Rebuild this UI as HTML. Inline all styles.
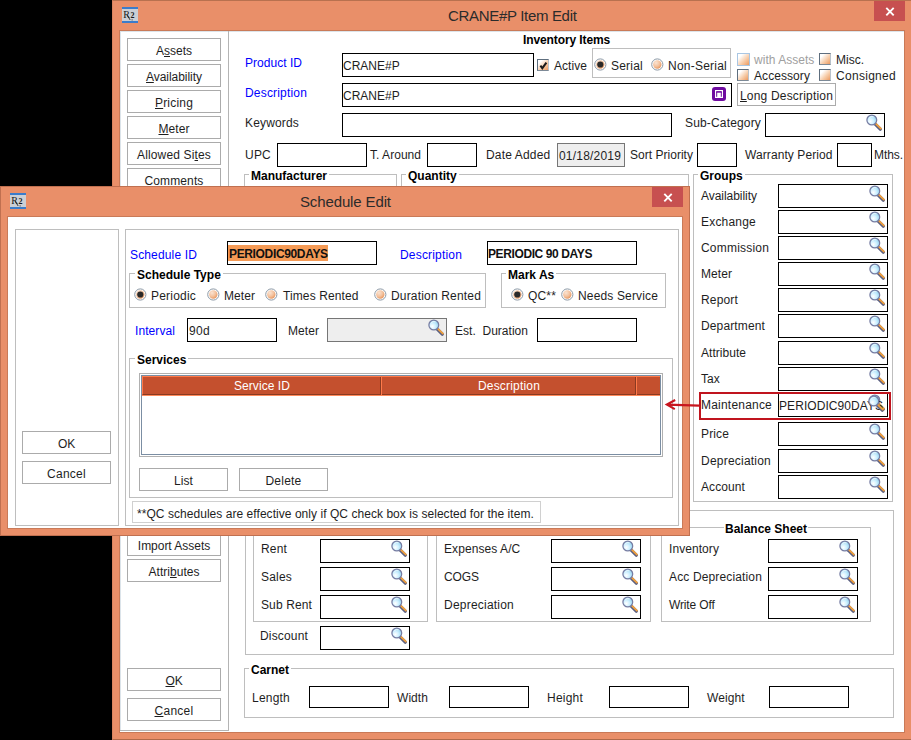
<!DOCTYPE html><html><head><meta charset="utf-8"><style>
html,body{margin:0;padding:0}
body{width:911px;height:740px;overflow:hidden;background:#000;position:relative;font-family:"Liberation Sans",sans-serif;}
div,span,svg{position:absolute;box-sizing:border-box;}
.t{white-space:nowrap;}
.i{overflow:visible}
u{text-decoration:underline;text-underline-offset:1px}
</style></head><body>
<svg width="0" height="0" style="position:absolute">
<defs>
<radialGradient id="lens" cx="35%" cy="65%" r="75%"><stop offset="0" stop-color="#FFFFFF"/><stop offset="0.45" stop-color="#CFF0FF"/><stop offset="1" stop-color="#86CBEA"/></radialGradient>
<radialGradient id="rg" cx="35%" cy="30%" r="80%"><stop offset="0" stop-color="#FBE3D2"/><stop offset="0.55" stop-color="#F3C19C"/><stop offset="1" stop-color="#E58F55"/></radialGradient>
<g id="mag">
<line x1="10.3" y1="10.1" x2="15.3" y2="15.1" stroke="#5C6080" stroke-width="3.4" stroke-linecap="round"/>
<line x1="11.0" y1="9.9" x2="15.9" y2="14.6" stroke="#F3A13C" stroke-width="1.8" stroke-linecap="round"/>
<circle cx="6.8" cy="6" r="4.9" fill="url(#lens)" stroke="#767CA2" stroke-width="1.25"/>
<path d="M4.2 3.8 A3.6 3.6 0 0 1 8.6 2.9" stroke="#fff" stroke-width="0.9" fill="none" opacity="0.8"/>
</g>
</defs></svg>

<div style="left:112px;top:0px;width:799px;height:740px;background:#E98F69;border-top:1px solid #B8714F;border-left:1px solid #D98460;border-bottom:1px solid #B06A4A"></div>
<svg class="i" style="left:122px;top:7px" width="16" height="16"><rect x="0" y="0" width="16" height="16" fill="#CBCFD5"/><rect x="0" y="0" width="16" height="2" fill="#3A7CCB"/><rect x="0" y="14" width="16" height="2" fill="#3A7CCB"/><text x="1.2" y="11.3" font-family="Liberation Serif" font-size="10" fill="#1A1A1A">R</text><path d="M5.2 8.2 L8.2 13" stroke="#222" stroke-width="0.9"/><text x="8.6" y="11.3" font-family="Liberation Serif" font-size="8" font-weight="bold" fill="#1A1A1A">2</text><rect x="9.6" y="12.4" width="1" height="1" fill="#333"/></svg>
<span class="t" style="left:448px;top:8px;font-size:15px;line-height:15px;color:#2B2B2B;letter-spacing:-0.32px">CRANE#P Item Edit</span>
<div style="left:874px;top:1px;width:31px;height:20px;background:#C75050"></div>
<svg class="i" style="left:874px;top:1px" width="31" height="20"><path d="M12.3 6.9 L19.7 14.3 M19.7 6.9 L12.3 14.3" stroke="#fff" stroke-width="1.9"/></svg>
<div style="left:119px;top:30px;width:786px;height:703px;background:#fff;border:1px solid #C97A58;"></div>
<div style="left:120px;top:31px;width:1px;height:700px;background:#DCE4EA"></div>
<div style="left:120px;top:31px;width:784px;height:1px;background:#DCE4EA"></div>
<div style="left:228px;top:31px;width:1px;height:700px;background:#B4B4B4"></div>
<div style="left:120px;top:730px;width:109px;height:1px;background:#B4B4B4"></div>
<div style="left:127px;top:38px;width:94px;height:23px;border:1px solid #ABABAB;background:#fff;"></div>
<span class="t" style="left:-26.0px;width:400px;text-align:center;top:45px;font-size:12px;line-height:12px;color:#1E1E1E;letter-spacing:-0.002px;">A<u>s</u>sets</span>
<div style="left:127px;top:64px;width:94px;height:23px;border:1px solid #ABABAB;background:#fff;"></div>
<span class="t" style="left:-26.0px;width:400px;text-align:center;top:71px;font-size:12px;line-height:12px;color:#1E1E1E;letter-spacing:-0.05px"><u>A</u>vailability</span>
<div style="left:127px;top:90px;width:94px;height:23px;border:1px solid #ABABAB;background:#fff;"></div>
<span class="t" style="left:-26.0px;width:400px;text-align:center;top:97px;font-size:12px;line-height:12px;color:#1E1E1E;letter-spacing:0.189px;"><u>P</u>ricing</span>
<div style="left:127px;top:116px;width:94px;height:23px;border:1px solid #ABABAB;background:#fff;"></div>
<span class="t" style="left:-26.0px;width:400px;text-align:center;top:123px;font-size:12px;line-height:12px;color:#1E1E1E;letter-spacing:0.065px;"><u>M</u>eter</span>
<div style="left:127px;top:142px;width:94px;height:23px;border:1px solid #ABABAB;background:#fff;"></div>
<span class="t" style="left:-26.0px;width:400px;text-align:center;top:149px;font-size:12px;line-height:12px;color:#1E1E1E;letter-spacing:0.151px;">Allowed Si<u>t</u>es</span>
<div style="left:127px;top:168px;width:94px;height:23px;border:1px solid #ABABAB;background:#fff;"></div>
<span class="t" style="left:-26.0px;width:400px;text-align:center;top:175px;font-size:12px;line-height:12px;color:#1E1E1E;letter-spacing:0.123px;">Comments</span>
<div style="left:127px;top:533px;width:94px;height:23px;border:1px solid #ABABAB;background:#fff;"></div>
<span class="t" style="left:-26.0px;width:400px;text-align:center;top:540px;font-size:12px;line-height:12px;color:#1E1E1E;letter-spacing:-0.027px;">Import Assets</span>
<div style="left:127px;top:559px;width:94px;height:23px;border:1px solid #ABABAB;background:#fff;"></div>
<span class="t" style="left:-26.0px;width:400px;text-align:center;top:566px;font-size:12px;line-height:12px;color:#1E1E1E;letter-spacing:0.031px;">Attri<u>b</u>utes</span>
<div style="left:127px;top:668px;width:94px;height:23px;border:1px solid #ABABAB;background:#fff;"></div>
<span class="t" style="left:-26.0px;width:400px;text-align:center;top:675px;font-size:12px;line-height:12px;color:#1E1E1E;letter-spacing:-0.169px;"><u>O</u>K</span>
<div style="left:127px;top:698px;width:94px;height:23px;border:1px solid #ABABAB;background:#fff;"></div>
<span class="t" style="left:-26.0px;width:400px;text-align:center;top:705px;font-size:12px;line-height:12px;color:#1E1E1E;letter-spacing:0.274px;"><u>C</u>ancel</span>
<span class="t" style="left:523px;top:34px;font-size:12px;line-height:12px;color:#000;font-weight:bold;letter-spacing:-0.1px">Inventory Items</span>
<span class="t" style="left:245px;top:57px;font-size:12px;line-height:12px;color:#0000FF;letter-spacing:0.031px;">Product ID</span>
<div style="left:342px;top:53px;width:192px;height:24px;border:1px solid #000;background:#fff;"></div>
<span class="t" style="left:343px;top:60px;font-size:12px;line-height:12px;color:#1E1E1E;letter-spacing:0px">CRANE#P</span>
<div style="left:537px;top:59px;width:12px;height:12px;border-left:1px solid #5E6E7E;border-top:1px solid #5E6E7E;border-right:1px solid #B9C2CB;border-bottom:1px solid #7D8A97;background:linear-gradient(135deg,#fff 0%,#fff 20%,#F7CDAA 60%,#EC9A60 100%)"></div>
<svg class="i" style="left:537px;top:59px" width="13" height="13"><path d="M3.4 6.6 L5.3 9.2 L9.4 3.6" stroke="#1A1A1A" stroke-width="2" fill="none"/></svg>
<span class="t" style="left:554px;top:60px;font-size:12px;line-height:12px;color:#1E1E1E;letter-spacing:0.054px;">Active</span>
<div style="left:592px;top:48px;width:139px;height:30px;border:1px solid #BEBEBE;"></div>
<svg class="i" style="left:594px;top:58px" width="13" height="13"><circle cx="6.3" cy="6.5" r="5.6" fill="#fff" stroke="#8C99A6" stroke-width="1"/><circle cx="6.3" cy="6.5" r="4.2" fill="url(#rg)"/><circle cx="6.3" cy="6.5" r="3.1" fill="#2A2A2A"/></svg>
<span class="t" style="left:611px;top:60px;font-size:12px;line-height:12px;color:#1E1E1E;letter-spacing:0.220px;">Serial</span>
<svg class="i" style="left:651px;top:58px" width="13" height="13"><circle cx="6.3" cy="6.5" r="5.6" fill="#fff" stroke="#8C99A6" stroke-width="1"/><circle cx="6.3" cy="6.5" r="4.2" fill="url(#rg)"/></svg>
<span class="t" style="left:668px;top:60px;font-size:12px;line-height:12px;color:#1E1E1E;letter-spacing:0.231px;">Non-Serial</span>
<div style="left:737px;top:53px;width:13px;height:13px;border:1px solid #A9C6E3;background:linear-gradient(135deg,#fff 0%,#fff 20%,#F7CDAA 60%,#EC9A60 100%)"></div>
<span class="t" style="left:754px;top:54px;font-size:12px;line-height:12px;color:#A0A0A0;letter-spacing:0.029px;">with Assets</span>
<div style="left:819px;top:53px;width:12px;height:12px;border-left:1px solid #5E6E7E;border-top:1px solid #5E6E7E;border-right:1px solid #B9C2CB;border-bottom:1px solid #7D8A97;background:linear-gradient(135deg,#fff 0%,#fff 20%,#F7CDAA 60%,#EC9A60 100%)"></div>
<span class="t" style="left:836px;top:54px;font-size:12px;line-height:12px;color:#1E1E1E;letter-spacing:0.001px;">Misc.</span>
<div style="left:737px;top:69px;width:12px;height:12px;border-left:1px solid #5E6E7E;border-top:1px solid #5E6E7E;border-right:1px solid #B9C2CB;border-bottom:1px solid #7D8A97;background:linear-gradient(135deg,#fff 0%,#fff 20%,#F7CDAA 60%,#EC9A60 100%)"></div>
<span class="t" style="left:754px;top:70px;font-size:12px;line-height:12px;color:#1E1E1E;letter-spacing:0.072px;">Accessory</span>
<div style="left:819px;top:69px;width:12px;height:12px;border-left:1px solid #5E6E7E;border-top:1px solid #5E6E7E;border-right:1px solid #B9C2CB;border-bottom:1px solid #7D8A97;background:linear-gradient(135deg,#fff 0%,#fff 20%,#F7CDAA 60%,#EC9A60 100%)"></div>
<span class="t" style="left:836px;top:70px;font-size:12px;line-height:12px;color:#1E1E1E;letter-spacing:0.292px;">Consigned</span>
<span class="t" style="left:245px;top:87px;font-size:12px;line-height:12px;color:#0000FF;letter-spacing:0.180px;">Description</span>
<div style="left:342px;top:83px;width:390px;height:24px;border:1px solid #000;background:#fff;"></div>
<span class="t" style="left:343px;top:90px;font-size:12px;line-height:12px;color:#1E1E1E;letter-spacing:0px">CRANE#P</span>
<svg class="i" style="left:712px;top:87px" width="14" height="14"><rect x="0" y="0" width="14" height="14" rx="3" fill="#6F0BA0"/><rect x="3" y="3" width="8" height="8" fill="#fff"/><rect x="4.2" y="4.1" width="5.6" height="1.6" fill="#6F0BA0"/><path d="M4.7 5 V9.8 M9.3 5 V9.8" stroke="#6F0BA0" stroke-width="1" fill="none"/></svg>
<div style="left:737px;top:83px;width:99px;height:23px;border:1px solid #ABABAB;background:#fff;"></div>
<span class="t" style="left:586.5px;width:400px;text-align:center;top:90px;font-size:12px;line-height:12px;color:#1E1E1E;letter-spacing:0.184px;"><u>L</u>ong Description</span>
<span class="t" style="left:245px;top:117px;font-size:12px;line-height:12px;color:#1E1E1E;letter-spacing:0.164px;">Keywords</span>
<div style="left:342px;top:113px;width:330px;height:24px;border:1px solid #000;background:#fff;"></div>
<span class="t" style="left:685px;top:117px;font-size:12px;line-height:12px;color:#1E1E1E;letter-spacing:0.163px;">Sub-Category</span>
<div style="left:765px;top:113px;width:120px;height:24px;border:1px solid #000;background:#fff;"></div>
<svg class="i" style="left:865px;top:114px" width="18" height="18"><use href="#mag"/></svg>
<span class="t" style="left:245px;top:149px;font-size:12px;line-height:12px;color:#1E1E1E;letter-spacing:0.221px;">UPC</span>
<div style="left:277px;top:143px;width:90px;height:24px;border:1px solid #000;background:#fff;"></div>
<span class="t" style="left:370px;top:149px;font-size:12px;line-height:12px;color:#1E1E1E;letter-spacing:0.034px;">T. Around</span>
<div style="left:427px;top:143px;width:50px;height:24px;border:1px solid #000;background:#fff;"></div>
<span class="t" style="left:486px;top:149px;font-size:12px;line-height:12px;color:#1E1E1E;letter-spacing:0.162px;">Date Added</span>
<div style="left:557px;top:143px;width:68px;height:24px;border:1px solid #767676;background:#EEEEEE;"></div>
<span class="t" style="left:559px;top:150px;font-size:12px;line-height:12px;color:#1E1E1E;letter-spacing:0.194px;">01/18/2019</span>
<span class="t" style="left:630px;top:149px;font-size:12px;line-height:12px;color:#1E1E1E;letter-spacing:0.025px;">Sort Priority</span>
<div style="left:697px;top:143px;width:40px;height:24px;border:1px solid #000;background:#fff;"></div>
<span class="t" style="left:745px;top:149px;font-size:12px;line-height:12px;color:#1E1E1E;letter-spacing:0.087px;">Warranty Period</span>
<div style="left:837px;top:143px;width:35px;height:24px;border:1px solid #000;background:#fff;"></div>
<span class="t" style="left:874px;top:149px;font-size:12px;line-height:12px;color:#1E1E1E;letter-spacing:-0.068px;">Mths.</span>
<div style="left:244px;top:174px;width:153px;height:340px;border:1px solid #BEBEBE;"></div>
<span class="t" style="left:249px;top:169px;font-size:12px;line-height:14px;font-weight:bold;color:#000;background:#fff;padding:0 2px 0 2px">Manufacturer</span>
<div style="left:401px;top:174px;width:288px;height:340px;border:1px solid #BEBEBE;"></div>
<span class="t" style="left:406px;top:169px;font-size:12px;line-height:14px;font-weight:bold;color:#000;background:#fff;padding:0 2px 0 2px">Quantity</span>
<div style="left:693px;top:174px;width:200px;height:328px;border:1px solid #BEBEBE;"></div>
<span class="t" style="left:698px;top:169px;font-size:12px;line-height:14px;font-weight:bold;color:#000;background:#fff;padding:0 2px 0 2px">Groups</span>
<span class="t" style="left:701px;top:190px;font-size:12px;line-height:12px;color:#1E1E1E;letter-spacing:-0.05px">Availability</span>
<div style="left:778px;top:184px;width:110px;height:24px;border:1px solid #000;background:#fff;"></div>
<svg class="i" style="left:868px;top:185px" width="18" height="18"><use href="#mag"/></svg>
<span class="t" style="left:701px;top:216px;font-size:12px;line-height:12px;color:#1E1E1E;letter-spacing:0.203px;">Exchange</span>
<div style="left:778px;top:210px;width:110px;height:24px;border:1px solid #000;background:#fff;"></div>
<svg class="i" style="left:868px;top:211px" width="18" height="18"><use href="#mag"/></svg>
<span class="t" style="left:701px;top:242px;font-size:12px;line-height:12px;color:#1E1E1E;letter-spacing:0.199px;">Commission</span>
<div style="left:778px;top:236px;width:110px;height:24px;border:1px solid #000;background:#fff;"></div>
<svg class="i" style="left:868px;top:237px" width="18" height="18"><use href="#mag"/></svg>
<span class="t" style="left:701px;top:268px;font-size:12px;line-height:12px;color:#1E1E1E;letter-spacing:0.065px;">Meter</span>
<div style="left:778px;top:262px;width:110px;height:24px;border:1px solid #000;background:#fff;"></div>
<svg class="i" style="left:868px;top:263px" width="18" height="18"><use href="#mag"/></svg>
<span class="t" style="left:701px;top:294px;font-size:12px;line-height:12px;color:#1E1E1E;letter-spacing:0.164px;">Report</span>
<div style="left:778px;top:288px;width:110px;height:24px;border:1px solid #000;background:#fff;"></div>
<svg class="i" style="left:868px;top:289px" width="18" height="18"><use href="#mag"/></svg>
<span class="t" style="left:701px;top:320px;font-size:12px;line-height:12px;color:#1E1E1E;letter-spacing:0.130px;">Department</span>
<div style="left:778px;top:314px;width:110px;height:24px;border:1px solid #000;background:#fff;"></div>
<svg class="i" style="left:868px;top:315px" width="18" height="18"><use href="#mag"/></svg>
<span class="t" style="left:701px;top:347px;font-size:12px;line-height:12px;color:#1E1E1E;letter-spacing:0.035px;">Attribute</span>
<div style="left:778px;top:341px;width:110px;height:24px;border:1px solid #000;background:#fff;"></div>
<svg class="i" style="left:868px;top:342px" width="18" height="18"><use href="#mag"/></svg>
<span class="t" style="left:701px;top:373px;font-size:12px;line-height:12px;color:#1E1E1E;letter-spacing:-0.001px;">Tax</span>
<div style="left:778px;top:367px;width:110px;height:24px;border:1px solid #000;background:#fff;"></div>
<svg class="i" style="left:868px;top:368px" width="18" height="18"><use href="#mag"/></svg>
<span class="t" style="left:701px;top:399px;font-size:12px;line-height:12px;color:#1E1E1E;letter-spacing:0.208px;">Maintenance</span>
<div style="left:778px;top:393px;width:110px;height:24px;border:1px solid #000;background:#fff;"></div>
<svg class="i" style="left:868px;top:394px" width="18" height="18"><use href="#mag"/></svg>
<span class="t" style="left:701px;top:428px;font-size:12px;line-height:12px;color:#1E1E1E;letter-spacing:0.132px;">Price</span>
<div style="left:778px;top:422px;width:110px;height:24px;border:1px solid #000;background:#fff;"></div>
<svg class="i" style="left:868px;top:423px" width="18" height="18"><use href="#mag"/></svg>
<span class="t" style="left:701px;top:455px;font-size:12px;line-height:12px;color:#1E1E1E;letter-spacing:0.219px;">Depreciation</span>
<div style="left:778px;top:449px;width:110px;height:24px;border:1px solid #000;background:#fff;"></div>
<svg class="i" style="left:868px;top:450px" width="18" height="18"><use href="#mag"/></svg>
<span class="t" style="left:701px;top:481px;font-size:12px;line-height:12px;color:#1E1E1E;letter-spacing:0.092px;">Account</span>
<div style="left:778px;top:475px;width:110px;height:24px;border:1px solid #000;background:#fff;"></div>
<svg class="i" style="left:868px;top:476px" width="18" height="18"><use href="#mag"/></svg>
<span class="t" style="left:779px;top:400px;font-size:12px;line-height:12px;color:#1E1E1E;letter-spacing:0.069px;">PERIODIC90DAYS</span>
<svg class="i" style="left:867px;top:395px" width="18" height="18"><use href="#mag"/></svg>
<div style="left:245px;top:510px;width:649px;height:145px;border:1px solid #BEBEBE;"></div>
<div style="left:253px;top:528px;width:175px;height:94px;border:1px solid #BEBEBE;"></div>
<div style="left:436px;top:528px;width:215px;height:94px;border:1px solid #BEBEBE;"></div>
<div style="left:661px;top:527px;width:210px;height:95px;border:1px solid #BEBEBE;"></div>
<span class="t" style="left:661px;width:210px;text-align:center;top:522px;font-size:12px;line-height:14px;font-weight:bold;color:#000"><span style="position:static;background:#fff;padding:0 1px">Balance Sheet</span></span>
<span class="t" style="left:261px;top:543px;font-size:12px;line-height:12px;color:#1E1E1E;letter-spacing:0.163px;">Rent</span>
<div style="left:320px;top:539px;width:90px;height:24px;border:1px solid #000;background:#fff;"></div>
<svg class="i" style="left:390px;top:540px" width="18" height="18"><use href="#mag"/></svg>
<span class="t" style="left:444px;top:543px;font-size:12px;line-height:12px;color:#1E1E1E;letter-spacing:0.080px;">Expenses A/C</span>
<div style="left:551px;top:539px;width:90px;height:24px;border:1px solid #000;background:#fff;"></div>
<svg class="i" style="left:621px;top:540px" width="18" height="18"><use href="#mag"/></svg>
<span class="t" style="left:669px;top:543px;font-size:12px;line-height:12px;color:#1E1E1E;letter-spacing:0.071px;">Inventory</span>
<div style="left:768px;top:539px;width:90px;height:24px;border:1px solid #000;background:#fff;"></div>
<svg class="i" style="left:838px;top:540px" width="18" height="18"><use href="#mag"/></svg>
<span class="t" style="left:261px;top:571px;font-size:12px;line-height:12px;color:#1E1E1E;letter-spacing:0.196px;">Sales</span>
<div style="left:320px;top:567px;width:90px;height:24px;border:1px solid #000;background:#fff;"></div>
<svg class="i" style="left:390px;top:568px" width="18" height="18"><use href="#mag"/></svg>
<span class="t" style="left:444px;top:571px;font-size:12px;line-height:12px;color:#1E1E1E;letter-spacing:-0.084px;">COGS</span>
<div style="left:551px;top:567px;width:90px;height:24px;border:1px solid #000;background:#fff;"></div>
<svg class="i" style="left:621px;top:568px" width="18" height="18"><use href="#mag"/></svg>
<span class="t" style="left:669px;top:571px;font-size:12px;line-height:12px;color:#1E1E1E;letter-spacing:0.143px;">Acc Depreciation</span>
<div style="left:768px;top:567px;width:90px;height:24px;border:1px solid #000;background:#fff;"></div>
<svg class="i" style="left:838px;top:568px" width="18" height="18"><use href="#mag"/></svg>
<span class="t" style="left:261px;top:599px;font-size:12px;line-height:12px;color:#1E1E1E;letter-spacing:0.121px;">Sub Rent</span>
<div style="left:320px;top:595px;width:90px;height:24px;border:1px solid #000;background:#fff;"></div>
<svg class="i" style="left:390px;top:596px" width="18" height="18"><use href="#mag"/></svg>
<span class="t" style="left:444px;top:599px;font-size:12px;line-height:12px;color:#1E1E1E;letter-spacing:0.219px;">Depreciation</span>
<div style="left:551px;top:595px;width:90px;height:24px;border:1px solid #000;background:#fff;"></div>
<svg class="i" style="left:621px;top:596px" width="18" height="18"><use href="#mag"/></svg>
<span class="t" style="left:669px;top:599px;font-size:12px;line-height:12px;color:#1E1E1E;letter-spacing:-0.148px;">Write Off</span>
<div style="left:768px;top:595px;width:90px;height:24px;border:1px solid #000;background:#fff;"></div>
<svg class="i" style="left:838px;top:596px" width="18" height="18"><use href="#mag"/></svg>
<span class="t" style="left:260px;top:630px;font-size:12px;line-height:12px;color:#1E1E1E;letter-spacing:0.164px;">Discount</span>
<div style="left:320px;top:626px;width:90px;height:24px;border:1px solid #000;background:#fff;"></div>
<svg class="i" style="left:390px;top:627px" width="18" height="18"><use href="#mag"/></svg>
<div style="left:244px;top:668px;width:650px;height:50px;border:1px solid #BEBEBE;"></div>
<span class="t" style="left:249px;top:663px;font-size:12px;line-height:14px;font-weight:bold;color:#000;background:#fff;padding:0 2px 0 2px">Carnet</span>
<span class="t" style="left:252px;top:692px;font-size:12px;line-height:12px;color:#1E1E1E;letter-spacing:0.216px;">Length</span>
<div style="left:309px;top:686px;width:80px;height:22px;border:1px solid #000;background:#fff;"></div>
<span class="t" style="left:397px;top:692px;font-size:12px;line-height:12px;color:#1E1E1E;letter-spacing:0.065px;">Width</span>
<div style="left:449px;top:686px;width:80px;height:22px;border:1px solid #000;background:#fff;"></div>
<span class="t" style="left:547px;top:692px;font-size:12px;line-height:12px;color:#1E1E1E;letter-spacing:0.219px;">Height</span>
<div style="left:609px;top:686px;width:80px;height:22px;border:1px solid #000;background:#fff;"></div>
<span class="t" style="left:707px;top:692px;font-size:12px;line-height:12px;color:#1E1E1E;letter-spacing:0.109px;">Weight</span>
<div style="left:769px;top:686px;width:80px;height:22px;border:1px solid #000;background:#fff;"></div>
<div style="left:0px;top:186px;width:690px;height:350px;background:#E98F69;border:1px solid #C07050"></div>
<svg class="i" style="left:10px;top:193px" width="16" height="16"><rect x="0" y="0" width="16" height="16" fill="#CBCFD5"/><rect x="0" y="0" width="16" height="2" fill="#3A7CCB"/><rect x="0" y="14" width="16" height="2" fill="#3A7CCB"/><text x="1.2" y="11.3" font-family="Liberation Serif" font-size="10" fill="#1A1A1A">R</text><path d="M5.2 8.2 L8.2 13" stroke="#222" stroke-width="0.9"/><text x="8.6" y="11.3" font-family="Liberation Serif" font-size="8" font-weight="bold" fill="#1A1A1A">2</text><rect x="9.6" y="12.4" width="1" height="1" fill="#333"/></svg>
<span class="t" style="left:300px;top:194px;font-size:15px;line-height:15px;color:#2B2B2B;letter-spacing:-0.13px">Schedule Edit</span>
<div style="left:652px;top:187px;width:31px;height:20px;background:#C75050"></div>
<svg class="i" style="left:652px;top:187px" width="31" height="20"><path d="M12.3 6.9 L19.7 14.3 M19.7 6.9 L12.3 14.3" stroke="#fff" stroke-width="1.9"/></svg>
<div style="left:7px;top:216px;width:676px;height:313px;background:#fff;border:1px solid #C97A58"></div>
<div style="left:15px;top:229px;width:104px;height:297px;border:1px solid #BEBEBE;"></div>
<div style="left:22px;top:431px;width:89px;height:23px;border:1px solid #ABABAB;background:#fff;"></div>
<span class="t" style="left:-133.5px;width:400px;text-align:center;top:438px;font-size:12px;line-height:12px;color:#1E1E1E;letter-spacing:-0.169px;">OK</span>
<div style="left:22px;top:461px;width:89px;height:23px;border:1px solid #ABABAB;background:#fff;"></div>
<span class="t" style="left:-133.5px;width:400px;text-align:center;top:468px;font-size:12px;line-height:12px;color:#1E1E1E;letter-spacing:0.274px;">Cancel</span>
<div style="left:125px;top:229px;width:554px;height:297px;border:1px solid #BEBEBE;"></div>
<span class="t" style="left:130px;top:249px;font-size:12px;line-height:12px;color:#0000FF;letter-spacing:0.148px;">Schedule ID</span>
<div style="left:227px;top:241px;width:150px;height:24px;border:1px solid #000;background:#fff;"></div>
<div style="left:228px;top:245px;width:100px;height:16px;background:#F59A55"></div>
<span class="t" style="left:229px;top:248px;font-size:12px;line-height:12px;color:#111;font-weight:bold;letter-spacing:-0.35px">PERIODIC90DAYS</span>
<span class="t" style="left:400px;top:249px;font-size:12px;line-height:12px;color:#0000FF;letter-spacing:0.180px;">Description</span>
<div style="left:487px;top:241px;width:150px;height:24px;border:1px solid #000;background:#fff;"></div>
<span class="t" style="left:488px;top:248px;font-size:12px;line-height:12px;color:#111;font-weight:bold;letter-spacing:-0.39px">PERIODIC 90 DAYS</span>
<div style="left:129px;top:273px;width:357px;height:35px;border:1px solid #BEBEBE;"></div>
<span class="t" style="left:135px;top:268px;font-size:12px;line-height:14px;font-weight:bold;color:#000;background:#fff;padding:0 2px 0 2px">Schedule Type</span>
<svg class="i" style="left:134px;top:288px" width="13" height="13"><circle cx="6.3" cy="6.5" r="5.6" fill="#fff" stroke="#8C99A6" stroke-width="1"/><circle cx="6.3" cy="6.5" r="4.2" fill="url(#rg)"/><circle cx="6.3" cy="6.5" r="3.1" fill="#2A2A2A"/></svg>
<span class="t" style="left:151px;top:290px;font-size:12px;line-height:12px;color:#1E1E1E;letter-spacing:0.206px;">Periodic</span>
<svg class="i" style="left:207px;top:288px" width="13" height="13"><circle cx="6.3" cy="6.5" r="5.6" fill="#fff" stroke="#8C99A6" stroke-width="1"/><circle cx="6.3" cy="6.5" r="4.2" fill="url(#rg)"/></svg>
<span class="t" style="left:224px;top:290px;font-size:12px;line-height:12px;color:#1E1E1E;letter-spacing:0.065px;">Meter</span>
<svg class="i" style="left:265px;top:288px" width="13" height="13"><circle cx="6.3" cy="6.5" r="5.6" fill="#fff" stroke="#8C99A6" stroke-width="1"/><circle cx="6.3" cy="6.5" r="4.2" fill="url(#rg)"/></svg>
<span class="t" style="left:283px;top:290px;font-size:12px;line-height:12px;color:#1E1E1E;letter-spacing:0.109px;">Times Rented</span>
<svg class="i" style="left:374px;top:288px" width="13" height="13"><circle cx="6.3" cy="6.5" r="5.6" fill="#fff" stroke="#8C99A6" stroke-width="1"/><circle cx="6.3" cy="6.5" r="4.2" fill="url(#rg)"/></svg>
<span class="t" style="left:391px;top:290px;font-size:12px;line-height:12px;color:#1E1E1E;letter-spacing:0.174px;">Duration Rented</span>
<div style="left:501px;top:273px;width:165px;height:35px;border:1px solid #BEBEBE;"></div>
<span class="t" style="left:506px;top:268px;font-size:12px;line-height:14px;font-weight:bold;color:#000;background:#fff;padding:0 2px 0 2px">Mark As</span>
<svg class="i" style="left:511px;top:288px" width="13" height="13"><circle cx="6.3" cy="6.5" r="5.6" fill="#fff" stroke="#8C99A6" stroke-width="1"/><circle cx="6.3" cy="6.5" r="4.2" fill="url(#rg)"/><circle cx="6.3" cy="6.5" r="3.1" fill="#2A2A2A"/></svg>
<span class="t" style="left:528px;top:290px;font-size:12px;line-height:12px;color:#1E1E1E;letter-spacing:0.165px;">QC**</span>
<svg class="i" style="left:561px;top:288px" width="13" height="13"><circle cx="6.3" cy="6.5" r="5.6" fill="#fff" stroke="#8C99A6" stroke-width="1"/><circle cx="6.3" cy="6.5" r="4.2" fill="url(#rg)"/></svg>
<span class="t" style="left:578px;top:290px;font-size:12px;line-height:12px;color:#1E1E1E;letter-spacing:0.151px;">Needs Service</span>
<span class="t" style="left:135px;top:325px;font-size:12px;line-height:12px;color:#0000FF;letter-spacing:0.081px;">Interval</span>
<div style="left:187px;top:318px;width:90px;height:24px;border:1px solid #000;background:#fff;"></div>
<span class="t" style="left:189px;top:325px;font-size:12px;line-height:12px;color:#1E1E1E;letter-spacing:0.326px;">90d</span>
<span class="t" style="left:288px;top:325px;font-size:12px;line-height:12px;color:#1E1E1E;letter-spacing:0.065px;">Meter</span>
<div style="left:327px;top:318px;width:120px;height:24px;border:1px solid #767676;background:#EEEEEE;"></div>
<svg class="i" style="left:427px;top:319px" width="18" height="18"><use href="#mag"/></svg>
<span class="t" style="left:455px;top:325px;font-size:12px;line-height:12px;color:#1E1E1E;letter-spacing:0.022px;">Est.&nbsp; Duration</span>
<div style="left:537px;top:318px;width:100px;height:24px;border:1px solid #000;background:#fff;"></div>
<div style="left:129px;top:358px;width:544px;height:140px;border:1px solid #BEBEBE;"></div>
<span class="t" style="left:135px;top:353px;font-size:12px;line-height:14px;font-weight:bold;color:#000;background:#fff;padding:0 2px 0 2px">Services</span>
<div style="left:139px;top:373px;width:524px;height:84px;border:1px solid #B0B0B0;background:#fff"></div>
<div style="left:141px;top:375px;width:520px;height:80px;border:1px solid #7B8EA3"></div>
<div style="left:142px;top:376px;width:518px;height:19px;background:#C4502E;border-top:1px solid #FF7A4A;border-left:1px solid #FF7A4A;border-bottom:1px solid #8A3A22"></div>
<div style="left:380px;top:377px;width:1px;height:18px;background:#8A3A22"></div>
<div style="left:381px;top:377px;width:1px;height:18px;background:#FF7A4A"></div>
<div style="left:635px;top:377px;width:1px;height:18px;background:#8A3A22"></div>
<div style="left:636px;top:377px;width:1px;height:18px;background:#FF7A4A"></div>
<span class="t" style="left:62px;width:400px;text-align:center;top:380px;font-size:12px;line-height:12px;color:#fff;letter-spacing:0.065px;">Service ID</span>
<span class="t" style="left:309px;width:400px;text-align:center;top:380px;font-size:12px;line-height:12px;color:#fff;letter-spacing:0.180px;">Description</span>
<div style="left:142px;top:395px;width:518px;height:1px;background:#FF8A5A"></div>
<div style="left:139px;top:468px;width:89px;height:23px;border:1px solid #ABABAB;background:#fff;"></div>
<span class="t" style="left:-16.5px;width:400px;text-align:center;top:475px;font-size:12px;line-height:12px;color:#1E1E1E;letter-spacing:0.082px;">List</span>
<div style="left:239px;top:468px;width:89px;height:23px;border:1px solid #ABABAB;background:#fff;"></div>
<span class="t" style="left:83.5px;width:400px;text-align:center;top:475px;font-size:12px;line-height:12px;color:#1E1E1E;letter-spacing:0.219px;">Delete</span>
<div style="left:132px;top:501px;width:409px;height:22px;border:1px solid #D0D0D0;background:#fff;"></div>
<span class="t" style="left:137px;top:508px;font-size:12px;line-height:12px;color:#1E1E1E;letter-spacing:0.047px;">**QC schedules are effective only if QC check box is selected for the item.</span>
<div style="left:699px;top:392px;width:192px;height:28px;border:2px solid #C0141E"></div>
<svg class="i" style="left:0;top:0" width="911" height="740"><path d="M699 405.6 L667 404.6 M675.2 400 L666.8 404.6 L674.8 409.2" stroke="#C8161F" stroke-width="2.1" fill="none"/></svg>
</body></html>
